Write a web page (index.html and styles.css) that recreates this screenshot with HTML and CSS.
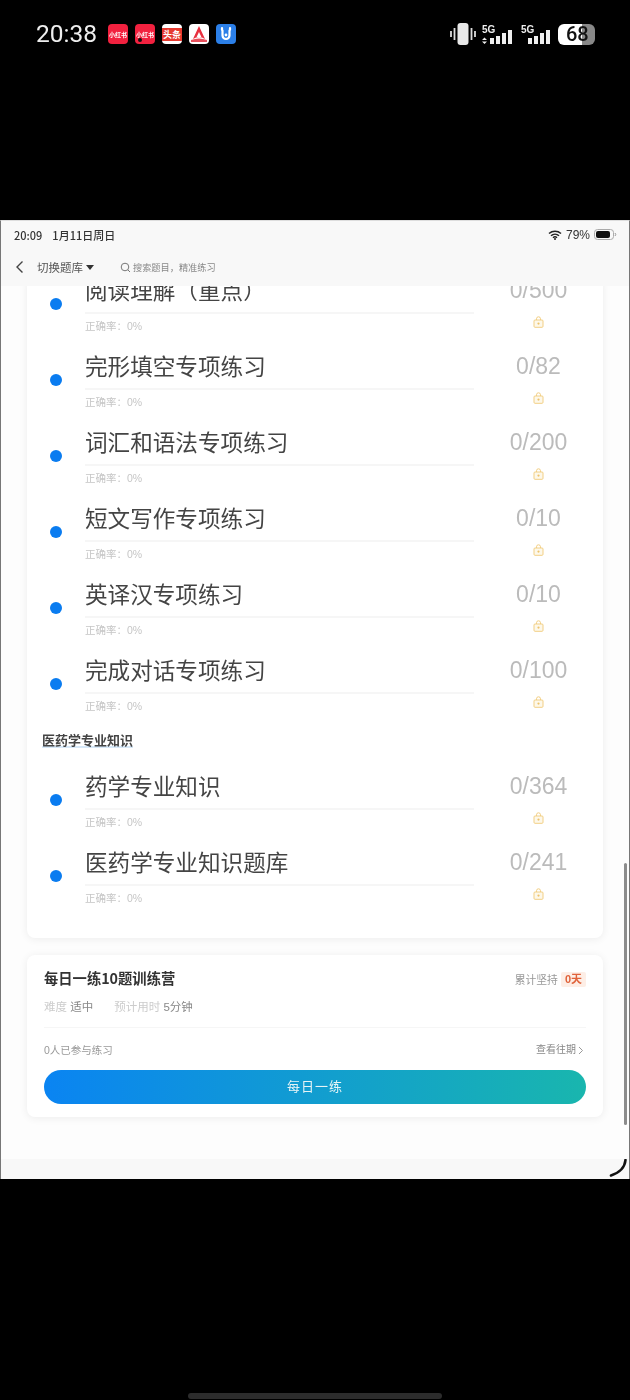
FILE: index.html
```html
<!DOCTYPE html>
<html lang="zh">
<head>
<meta charset="utf-8">
<title>题库练习</title>
<link rel="stylesheet" href="styles.css">
</head>
<body>
<header class="phone-bar">
  <div class="phone-left">
    <span class="phone-time">20:38</span>
    <div class="apps">
      <span class="app app-red">小红书</span>
      <span class="app app-red app-dot">小红书</span>
      <span class="app app-news"><b>头条</b></span>
      <span class="app app-white">
        <svg viewBox="0 0 20 20" width="20" height="20"><path d="M10 2 L16 15 Q10 11 4 15 Z" fill="#e8303f"/><path d="M10 8 L12.4 13 H7.6 Z" fill="#fff"/><path d="M2 16 Q10 13 18 16 V18 H2 Z" fill="#e8505c"/></svg>
      </span>
      <span class="app app-blue">
        <svg viewBox="0 0 20 20" width="20" height="20"><path d="M6 4 V6 M14 4 V6 M6.5 6.5 V11.5 A3.5 3.5 0 0 0 13.5 11.5 V6.5" fill="none" stroke="#fff" stroke-width="2.2" stroke-linecap="round"/><circle cx="10" cy="11" r="1.4" fill="#fff"/></svg>
      </span>
    </div>
  </div>
  <div class="phone-right">
    <svg class="vibrate" viewBox="0 0 26 24" width="26" height="24"><rect x="7.500" y="1" width="11" height="22" rx="3" fill="#e8e8e8"/><path d="M4.500 6 V18 M1 9 V15 M21.500 6 V18 M25 9 V15" stroke="#ddd" stroke-width="1.800"/></svg>
    <div class="sig">
      <span class="sig-label">5G</span>
      <svg viewBox="0 0 32 16" width="32" height="16"><path d="M3.500 8.500 L6 11 H1 Z M3.500 15 L1 12.500 H6 Z" fill="#eee"/><rect x="9" y="9" width="4" height="6" fill="#eee"/><rect x="15" y="7" width="4" height="8" fill="#eee"/><rect x="21" y="4" width="4" height="11" fill="#eee"/><rect x="27" y="1" width="4" height="14" fill="#eee"/></svg>
    </div>
    <div class="sig sig-second">
      <span class="sig-label">5G</span>
      <svg viewBox="0 0 26 16" width="26" height="16"><rect x="2" y="9" width="4" height="6" fill="#eee"/><rect x="8" y="7" width="4" height="8" fill="#eee"/><rect x="14" y="4" width="4" height="11" fill="#eee"/><rect x="20" y="1" width="4" height="14" fill="#eee"/></svg>
    </div>
    <div class="batt"><span class="batt-num">68</span></div>
  </div>
</header>

<div class="screen">
  <div class="top">
    <div class="tablet-status">
      <div class="tablet-left"><span>20:09</span><span>1月11日周日</span></div>
      <div class="tablet-right">
        <svg viewBox="0 0 14 10" width="14" height="10"><path d="M1 3.500 A9 9 0 0 1 13 3.500 M3 5.700 A6 6 0 0 1 11 5.700 M5 7.700 A3 3 0 0 1 9 7.700" fill="none" stroke="#222" stroke-width="1.500"/><circle cx="7" cy="9" r="1" fill="#222"/></svg>
        <span class="tablet-pct">79%</span>
        <svg viewBox="0 0 23 11" width="23" height="11"><rect x="0.500" y="0.500" width="19" height="10" rx="3" fill="none" stroke="#aaa"/><rect x="2" y="2" width="14" height="7" rx="2" fill="#111"/><path d="M21 4 Q22.500 5.500 21 7" fill="none" stroke="#999"/></svg>
      </div>
    </div>
    <nav class="nav">
      <svg class="back" viewBox="0 0 9 14" width="9" height="14"><path d="M7.500 1.500 L2 7 L7.500 12.500" fill="none" stroke="#444" stroke-width="1.400"/></svg>
      <span class="switch">切换题库</span>
      <span class="caret"></span>
      <svg class="search-ico" viewBox="0 0 11 11" width="11" height="11"><circle cx="5" cy="5" r="3.800" fill="none" stroke="#777" stroke-width="1"/><path d="M7.800 7.800 L10 10" stroke="#777" stroke-width="1"/></svg>
      <span class="search-text">搜索题目，精准练习</span>
    </nav>
  </div>

  <main class="main">
    <section class="card list-card">
      <div class="row"><span class="dot"></span><div class="row-main"><div class="row-title">阅读理解（重点）</div><div class="row-line"></div><div class="row-sub">正确率：0%</div></div><div class="row-side"><div class="row-num">0/500</div><svg class="lock" viewBox="0 0 11 12" width="11" height="12"><path d="M3.500 4 V2.800 A2 2 0 0 1 7.500 2.800 V4" fill="none" stroke="#f2cf85" stroke-width="1"/><rect x="1" y="4" width="9" height="7.300" rx="1" fill="#fdf8ea" stroke="#f2cf85"/><circle cx="5.500" cy="7.600" r="1.100" fill="#eec36b"/></svg></div></div>
      <div class="row"><span class="dot"></span><div class="row-main"><div class="row-title">完形填空专项练习</div><div class="row-line"></div><div class="row-sub">正确率：0%</div></div><div class="row-side"><div class="row-num">0/82</div><svg class="lock" viewBox="0 0 11 12" width="11" height="12"><path d="M3.500 4 V2.800 A2 2 0 0 1 7.500 2.800 V4" fill="none" stroke="#f2cf85" stroke-width="1"/><rect x="1" y="4" width="9" height="7.300" rx="1" fill="#fdf8ea" stroke="#f2cf85"/><circle cx="5.500" cy="7.600" r="1.100" fill="#eec36b"/></svg></div></div>
      <div class="row"><span class="dot"></span><div class="row-main"><div class="row-title">词汇和语法专项练习</div><div class="row-line"></div><div class="row-sub">正确率：0%</div></div><div class="row-side"><div class="row-num">0/200</div><svg class="lock" viewBox="0 0 11 12" width="11" height="12"><path d="M3.500 4 V2.800 A2 2 0 0 1 7.500 2.800 V4" fill="none" stroke="#f2cf85" stroke-width="1"/><rect x="1" y="4" width="9" height="7.300" rx="1" fill="#fdf8ea" stroke="#f2cf85"/><circle cx="5.500" cy="7.600" r="1.100" fill="#eec36b"/></svg></div></div>
      <div class="row"><span class="dot"></span><div class="row-main"><div class="row-title">短文写作专项练习</div><div class="row-line"></div><div class="row-sub">正确率：0%</div></div><div class="row-side"><div class="row-num">0/10</div><svg class="lock" viewBox="0 0 11 12" width="11" height="12"><path d="M3.500 4 V2.800 A2 2 0 0 1 7.500 2.800 V4" fill="none" stroke="#f2cf85" stroke-width="1"/><rect x="1" y="4" width="9" height="7.300" rx="1" fill="#fdf8ea" stroke="#f2cf85"/><circle cx="5.500" cy="7.600" r="1.100" fill="#eec36b"/></svg></div></div>
      <div class="row"><span class="dot"></span><div class="row-main"><div class="row-title">英译汉专项练习</div><div class="row-line"></div><div class="row-sub">正确率：0%</div></div><div class="row-side"><div class="row-num">0/10</div><svg class="lock" viewBox="0 0 11 12" width="11" height="12"><path d="M3.500 4 V2.800 A2 2 0 0 1 7.500 2.800 V4" fill="none" stroke="#f2cf85" stroke-width="1"/><rect x="1" y="4" width="9" height="7.300" rx="1" fill="#fdf8ea" stroke="#f2cf85"/><circle cx="5.500" cy="7.600" r="1.100" fill="#eec36b"/></svg></div></div>
      <div class="row"><span class="dot"></span><div class="row-main"><div class="row-title">完成对话专项练习</div><div class="row-line"></div><div class="row-sub">正确率：0%</div></div><div class="row-side"><div class="row-num">0/100</div><svg class="lock" viewBox="0 0 11 12" width="11" height="12"><path d="M3.500 4 V2.800 A2 2 0 0 1 7.500 2.800 V4" fill="none" stroke="#f2cf85" stroke-width="1"/><rect x="1" y="4" width="9" height="7.300" rx="1" fill="#fdf8ea" stroke="#f2cf85"/><circle cx="5.500" cy="7.600" r="1.100" fill="#eec36b"/></svg></div></div>
      <div class="group-head"><span class="group-name">医药学专业知识</span></div>
      <div class="row"><span class="dot"></span><div class="row-main"><div class="row-title">药学专业知识</div><div class="row-line"></div><div class="row-sub">正确率：0%</div></div><div class="row-side"><div class="row-num">0/364</div><svg class="lock" viewBox="0 0 11 12" width="11" height="12"><path d="M3.500 4 V2.800 A2 2 0 0 1 7.500 2.800 V4" fill="none" stroke="#f2cf85" stroke-width="1"/><rect x="1" y="4" width="9" height="7.300" rx="1" fill="#fdf8ea" stroke="#f2cf85"/><circle cx="5.500" cy="7.600" r="1.100" fill="#eec36b"/></svg></div></div>
      <div class="row"><span class="dot"></span><div class="row-main"><div class="row-title">医药学专业知识题库</div><div class="row-line"></div><div class="row-sub">正确率：0%</div></div><div class="row-side"><div class="row-num">0/241</div><svg class="lock" viewBox="0 0 11 12" width="11" height="12"><path d="M3.500 4 V2.800 A2 2 0 0 1 7.500 2.800 V4" fill="none" stroke="#f2cf85" stroke-width="1"/><rect x="1" y="4" width="9" height="7.300" rx="1" fill="#fdf8ea" stroke="#f2cf85"/><circle cx="5.500" cy="7.600" r="1.100" fill="#eec36b"/></svg></div></div>
    </section>

    <section class="card daily-card">
      <div class="daily-head">
        <span class="daily-title">每日一练10题训练营</span>
        <span class="streak">累计坚持<span class="streak-badge">0天</span></span>
      </div>
      <div class="daily-meta">
        <span><span class="meta-key">难度</span> 适中</span>
        <span><span class="meta-key">预计用时</span> 5分钟</span>
      </div>
      <div class="daily-foot">
        <span>0人已参与练习</span>
        <span class="history">查看往期<svg viewBox="0 0 6 9" width="6" height="9"><path d="M1 1 L4.500 4.500 L1 8" fill="none" stroke="#999" stroke-width="1"/></svg></span>
      </div>
      <button class="daily-btn" type="button">每日一练</button>
    </section>
  </main>

  <div class="bottom-bar"></div>
  <div class="scrollbar"></div>
  <svg class="spinner" viewBox="0 0 18 18" width="18" height="18"><path d="M16.500 1 Q15.500 12 2 16.500" fill="none" stroke="#111" stroke-width="2.600" stroke-linecap="round"/></svg>
</div>

<footer class="home-area"><span class="home-pill"></span></footer>
</body>
</html>
```

FILE: styles.css
```css
* { box-sizing: border-box; }
html, body { margin: 0; padding: 0; }
body {
  width: 630px;
  height: 1400px;
  background: #000;
  overflow: hidden;
  display: flex;
  flex-direction: column;
  font-family: "Liberation Sans", "Noto Sans CJK SC", sans-serif;
}

/* phone status bar */
.phone-bar {
  height: 220px;
  flex: none;
  display: flex;
  justify-content: space-between;
  align-items: flex-start;
  padding: 23px 35px 0 36px;
  filter: blur(0.3px);
}
.phone-left, .phone-right { display: flex; align-items: center; height: 22px; }
.phone-time {
  font-family: Roboto, sans-serif;
  font-size: 24.500px;
  color: #eee;
  width: 72px;
  line-height: 22px;
}
.apps { display: flex; gap: 7px; }
.app {
  width: 20px;
  height: 20px;
  border-radius: 4px;
  display: flex;
  align-items: center;
  justify-content: center;
  overflow: hidden;
  font-family: "Noto Sans CJK SC", sans-serif;
  font-size: 6px;
  font-weight: 700;
  color: #fff;
  white-space: nowrap;
  position: relative;
}
.app-red { background: #f2213f; }
.app-dot::after {
  content: "";
  position: absolute;
  left: 3px;
  bottom: 2px;
  width: 4px;
  height: 4px;
  border-radius: 50%;
  background: #111;
}
.app-news { background: #fff; }
.app-news b {
  display: block;
  width: 100%;
  background: #e6392f;
  text-align: center;
  font-size: 9px;
  line-height: 13px;
  font-weight: 700;
}
.app-white { background: #fff; }
.app-blue { background: #2b7fe8; }

.vibrate { margin-right: 5px; }
.sig {
  position: relative;
  width: 32px;
  height: 22px;
  display: flex;
  align-items: flex-end;
  justify-content: flex-end;
}
.sig-second { margin-left: 7px; }
.sig-label {
  position: absolute;
  left: 1px;
  top: 1px;
  font-size: 10px;
  line-height: 11px;
  font-weight: 700;
  color: #eee;
}
.batt {
  margin-left: 6px;
  width: 37px;
  height: 21px;
  border-radius: 6px;
  background: linear-gradient(90deg, #fff 0 24px, #888 24px);
  color: #111;
  display: flex;
  align-items: center;
  padding-left: 8px;
}
.batt-num { font-size: 20px; font-weight: 500; font-family: Roboto, sans-serif; line-height: 21px; }

/* screen */
.screen {
  position: relative;
  height: 959px;
  flex: none;
  background: #fdfdfd;
  border-left: 1px solid #777;
  border-right: 1px solid #777;
  border-top: 1px solid #ddd;
  display: flex;
  flex-direction: column;
  overflow: hidden;
  filter: blur(0.3px);
}
.top { flex: none; height: 65px; background: #f8f8f8; }
.tablet-status {
  height: 27px;
  display: flex;
  justify-content: space-between;
  align-items: center;
  padding: 0 12px 0 13px;
}
.tablet-left {
  display: flex;
  gap: 10px;
  font-size: 11px;
  font-weight: 500;
  color: #333;
  font-family: "Noto Sans CJK SC", sans-serif;
}
.tablet-right { display: flex; align-items: center; gap: 4px; }
.tablet-pct { font-size: 12px; color: #333; }
.nav { display: flex; align-items: center; height: 38px; padding: 0 0 0 14px; }
.back { margin-right: 13px; }
.switch { font-size: 11.500px; color: #555; }
.caret {
  margin-left: 3px;
  width: 0;
  height: 0;
  border-left: 4.500px solid transparent;
  border-right: 4.500px solid transparent;
  border-top: 5px solid #333;
}
.search-ico { margin-left: 26px; margin-right: 2px; }
.search-text { font-size: 9.200px; color: #888; }

.main {
  flex: 1;
  min-height: 0;
  overflow: hidden;
  padding: 0 26px;
  display: flex;
  flex-direction: column;
  gap: 17px;
}
.card {
  background: #fff;
  border-radius: 8px;
  box-shadow: 0 1px 8px rgba(0, 0, 0, 0.07);
  flex: none;
}
.list-card { margin-top: -10px; padding-bottom: 14px; }
.row {
  height: 76px;
  display: flex;
  padding-left: 23px;
}
.dot {
  flex: none;
  width: 12px;
  height: 12px;
  margin-top: 22px;
  margin-right: 23px;
  border-radius: 50%;
  background: #0a7cf0;
}
.row-main { width: 389px; flex: none; }
.row-title {
  font-family: "Noto Sans CJK SC", sans-serif;
  font-size: 22.600px;
  line-height: 28px;
  color: #444;
  white-space: nowrap;
}
.row-line { height: 2px; margin-top: 8px; background: #f6f6f6; }
.row-sub { font-size: 10.500px; line-height: 24px; color: #c6c6c6; }
.row-side { flex: 1; display: flex; flex-direction: column; align-items: center; }
.row-num { font-size: 23px; line-height: 28px; color: #bbb; }
.lock { margin-top: 12px; }

.group-head { height: 40px; padding: 0 0 0 15px; display: flex; align-items: flex-start; }
.group-name {
  margin-top: 1px;
  font-size: 13px;
  line-height: 13px;
  font-weight: 700;
  color: #444;
  font-family: "Noto Sans CJK SC", sans-serif;
  border-bottom: 2px solid #d6e8f8;
}

.daily-card { height: 162px; padding: 15px 17px 0; display: flex; flex-direction: column; }
.daily-head { display: flex; justify-content: space-between; align-items: flex-start; height: 18px; }
.daily-title {
  font-family: "Noto Sans CJK SC", sans-serif;
  font-size: 14.300px;
  line-height: 16px;
  font-weight: 700;
  color: #333;
}
.streak { font-size: 10.800px; color: #999; display: flex; align-items: center; gap: 3px; margin-top: 1px; }
.streak-badge {
  background: #fdeee6;
  color: #e0623a;
  font-weight: 700;
  font-size: 11px;
  padding: 0 4px;
  line-height: 15px;
  border-radius: 2px;
}
.daily-meta {
  display: flex;
  gap: 21px;
  margin-top: 11px;
  height: 16px;
  line-height: 16px;
  font-size: 11.500px;
  color: #888;
}
.meta-key { color: #ccc; }
.daily-foot {
  margin-top: 12px;
  padding-top: 14px;
  border-top: 1px solid #f6f6f6;
  display: flex;
  justify-content: space-between;
  font-size: 10.500px;
  line-height: 16px;
  color: #999;
  padding-right: 2px;
}
.history { display: flex; align-items: center; gap: 2px; color: #888; font-size: 10px; }
.daily-btn {
  margin-top: 12px;
  height: 34px;
  width: 100%;
  border: 0;
  border-radius: 17px;
  padding: 0 0 3px;
  background: linear-gradient(90deg, #0a84f2, #19b6ae);
  color: #e6f4f6;
  font-family: inherit;
  font-size: 13px;
  letter-spacing: 1px;
}

.bottom-bar { flex: none; height: 20px; background: #f8f8f8; }
.scrollbar {
  position: absolute;
  right: 2px;
  top: 642px;
  width: 3px;
  height: 262px;
  border-radius: 2px;
  background: #8c8c8c;
}
.spinner { position: absolute; right: 2px; bottom: 2px; }

.home-area { flex: 1; display: flex; justify-content: center; align-items: flex-end; padding-bottom: 1px; }
.home-pill { width: 254px; height: 6px; border-radius: 3px; background: #2c2c2c; }
```
